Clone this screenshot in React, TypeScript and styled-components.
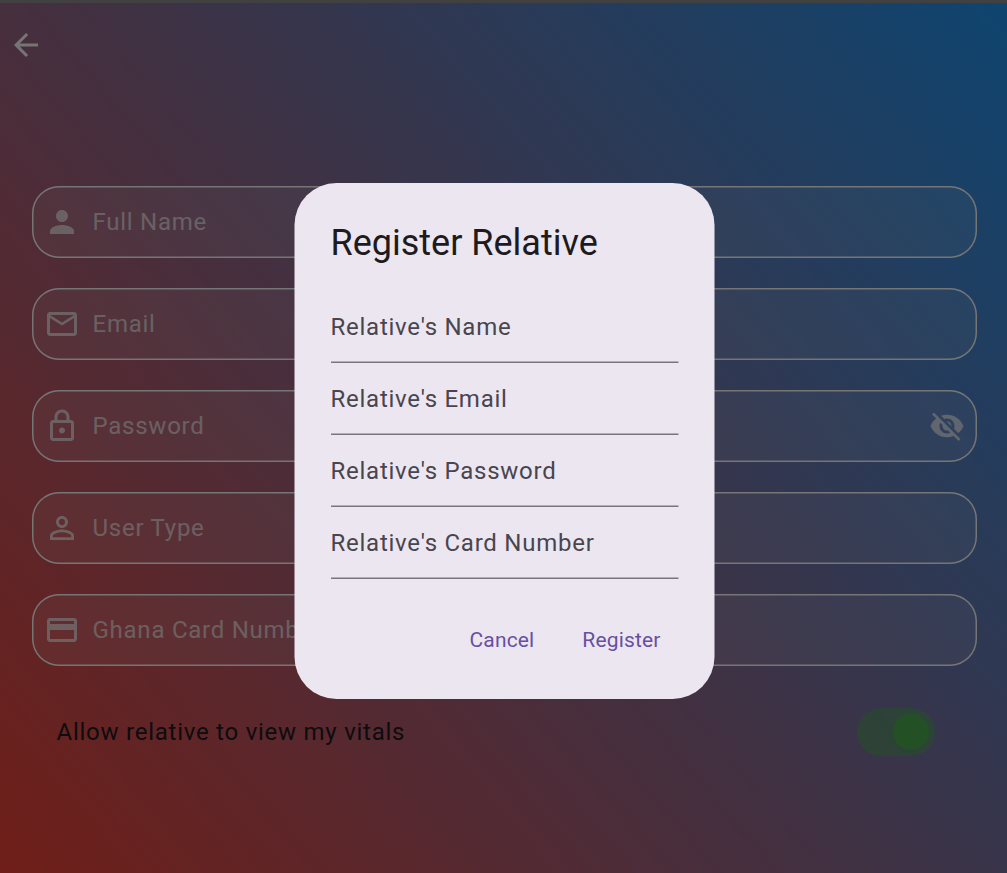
import React from "react";
import styled, { createGlobalStyle } from "styled-components";

const GlobalStyle = createGlobalStyle`
  *, *::before, *::after { box-sizing: border-box; }
  html, body, #root { height: 100%; }
  body { margin: 0; overflow: hidden; font-family: Roboto, sans-serif; background: #414141; }
  button { border: 0; padding: 0; background: none; font: inherit; cursor: pointer; }
`;

const Screen = styled.div`
  position: relative;
  height: 100%;
  padding-top: 3px;
`;

const Page = styled.main`
  display: flex;
  flex-direction: column;
  height: 100%;
  background: linear-gradient(229.14deg, #2196f3, #f44336);
`;

const AppBar = styled.header`
  display: flex;
  align-items: center;
  height: 84px;
  padding-left: 8px;
`;

const BackButton = styled.button`
  display: flex;
  width: 36px;
  height: 36px;
  color: #fff;
`;

const Form = styled.form`
  display: flex;
  flex-direction: column;
  gap: 30px;
  padding: 99px 30px 0 32px;
`;

const Field = styled.label`
  display: flex;
  align-items: center;
  height: 72px;
  padding: 0 12px;
  gap: 12.5px;
  border-radius: 27px;
  background: rgba(255, 255, 255, 0.1);
  box-shadow: inset 0 0 0 1.5px #fff;
  color: rgba(255, 255, 255, 0.7);
`;

const FieldLabel = styled.span`
  flex: 1;
  font-size: 24px;
  line-height: 36px;
  letter-spacing: 0.75px;
`;

const Icon = styled.svg`
  display: block;
  flex: none;
  width: 36px;
  height: 36px;
  fill: currentColor;
`;

const ToggleRow = styled.div`
  display: flex;
  align-items: center;
  justify-content: space-between;
  padding: 0 42px 0 24.5px;
  margin-top: 12px;
`;

const ToggleLabel = styled.span`
  font-size: 24px;
  line-height: 36px;
  letter-spacing: 0.75px;
  color: #1d1b20;
`;

const Switch = styled.button`
  display: flex;
  align-items: center;
  justify-content: flex-end;
  width: 78px;
  height: 48px;
  padding-right: 6px;
  border-radius: 24px;
  background: rgba(76, 175, 80, 0.5);
`;

const Thumb = styled.span`
  width: 36px;
  height: 36px;
  border-radius: 50%;
  background: #4caf50;
`;

const Barrier = styled.div`
  position: absolute;
  inset: 3px 0 0;
  display: flex;
  align-items: center;
  justify-content: center;
  padding: 6px 0 0 3px;
  background: rgba(0, 0, 0, 0.54);
`;

const Dialog = styled.section`
  display: flex;
  flex-direction: column;
  width: 420px;
  height: 516px;
  padding: 36px;
  border-radius: 42px;
  background: #ece6f0;
  transform: translateX(-0.5px);
`;

const Title = styled.h1`
  margin: 0 0 24px;
  font-size: 36px;
  font-weight: 400;
  line-height: 48px;
  color: #1d1b20;
`;

const DialogField = styled.label`
  display: flex;
  flex: none;
  align-items: center;
  height: 72px;
  font-size: 24px;
  letter-spacing: 0.75px;
  color: #49454f;
  box-shadow: inset 0 -1.5px 0 #79747e;
`;

const Actions = styled.footer`
  display: flex;
  justify-content: flex-end;
  gap: 12px;
  margin-top: 31px;
`;

const TextButton = styled.button`
  height: 60px;
  padding: 0 18px;
  font-size: 21px;
  letter-spacing: 0.15px;
  color: #6750a4;
`;

const paths = {
  back: "M20 11H7.83l5.59-5.59L12 4l-8 8 8 8 1.41-1.41L7.83 13H20v-2z",
  person: "M12 12c2.21 0 4-1.79 4-4s-1.79-4-4-4-4 1.79-4 4 1.79 4 4 4zm0 2c-2.67 0-8 1.34-8 4v2h16v-2c0-2.66-5.33-4-8-4z",
  mail: "M22 6c0-1.1-.9-2-2-2H4c-1.1 0-2 .9-2 2v12c0 1.1.9 2 2 2h16c1.1 0 2-.9 2-2V6zm-2 0l-8 5-8-5h16zm0 12H4V8l8 5 8-5v10z",
  lock: "M18 8h-1V6c0-2.76-2.24-5-5-5S7 3.24 7 6v2H6c-1.1 0-2 .9-2 2v10c0 1.1.9 2 2 2h12c1.1 0 2-.9 2-2V10c0-1.1-.9-2-2-2zM9 6c0-1.66 1.34-3 3-3s3 1.34 3 3v2H9V6zm9 14H6V10h12v10zm-6-3c1.1 0 2-.9 2-2s-.9-2-2-2-2 .9-2 2 .9 2 2 2z",
  personOutline: "M12 5.9c1.16 0 2.1.94 2.1 2.1s-.94 2.1-2.1 2.1S9.9 9.16 9.9 8s.94-2.1 2.1-2.1m0 9c2.97 0 6.1 1.46 6.1 2.1v1.1H5.9V17c0-.64 3.13-2.1 6.1-2.1M12 4C9.79 4 8 5.79 8 8s1.79 4 4 4 4-1.79 4-4-1.79-4-4-4zm0 9c-2.67 0-8 1.34-8 4v3h16v-3c0-2.66-5.33-4-8-4z",
  card: "M20 4H4c-1.11 0-1.99.89-1.99 2L2 18c0 1.11.89 2 2 2h16c1.11 0 2-.89 2-2V6c0-1.11-.89-2-2-2zm0 14H4v-6h16v6zm0-10H4V6h16v2z",
  eyeOff: "M12 7c2.76 0 5 2.24 5 5 0 .65-.13 1.26-.36 1.83l2.92 2.92c1.51-1.26 2.7-2.89 3.43-4.75-1.73-4.39-6-7.5-11-7.5-1.4 0-2.74.25-3.98.7l2.16 2.16C10.74 7.13 11.35 7 12 7zM2 4.27l2.28 2.28.46.46C3.08 8.3 1.78 10.02 1 12c1.73 4.39 6 7.5 11 7.5 1.55 0 3.03-.3 4.38-.84l.42.42L19.73 22 21 20.73 3.27 3 2 4.27zM7.53 9.8l1.55 1.55c-.05.21-.08.43-.08.65 0 1.66 1.34 3 3 3 .22 0 .44-.03.65-.08l1.55 1.55c-.67.33-1.41.53-2.2.53-2.76 0-5-2.24-5-5 0-.79.2-1.53.53-2.2zm4.31-.78l3.15 3.15.02-.16c0-1.66-1.34-3-3-3l-.17.01z",
};

function Glyph({ name }: { name: keyof typeof paths }) {
  return (
    <Icon viewBox="0 0 24 24" aria-hidden="true">
      <path d={paths[name]} />
    </Icon>
  );
}

const fields: { label: string; icon: keyof typeof paths; secret?: boolean }[] = [
  { label: "Full Name", icon: "person" },
  { label: "Email", icon: "mail" },
  { label: "Password", icon: "lock", secret: true },
  { label: "User Type", icon: "personOutline" },
  { label: "Ghana Card Number", icon: "card" },
];

const relativeFields = ["Relative's Name", "Relative's Email", "Relative's Password", "Relative's Card Number"];

export default function App() {
  return (
    <Screen>
      <GlobalStyle />
      <Page>
        <AppBar>
          <BackButton aria-label="Back">
            <Glyph name="back" />
          </BackButton>
        </AppBar>
        <Form>
          {fields.map((f) => (
            <Field key={f.label}>
              <Glyph name={f.icon} />
              <FieldLabel>{f.label}</FieldLabel>
              {f.secret && <Glyph name="eyeOff" />}
            </Field>
          ))}
          <ToggleRow>
            <ToggleLabel>Allow relative to view my vitals</ToggleLabel>
            <Switch type="button" role="switch" aria-checked="true" aria-label="Allow relative">
              <Thumb />
            </Switch>
          </ToggleRow>
        </Form>
      </Page>
      <Barrier>
        <Dialog role="dialog">
          <Title>Register Relative</Title>
          {relativeFields.map((label) => (
            <DialogField key={label}>{label}</DialogField>
          ))}
          <Actions>
            <TextButton>Cancel</TextButton>
            <TextButton>Register</TextButton>
          </Actions>
        </Dialog>
      </Barrier>
    </Screen>
  );
}
